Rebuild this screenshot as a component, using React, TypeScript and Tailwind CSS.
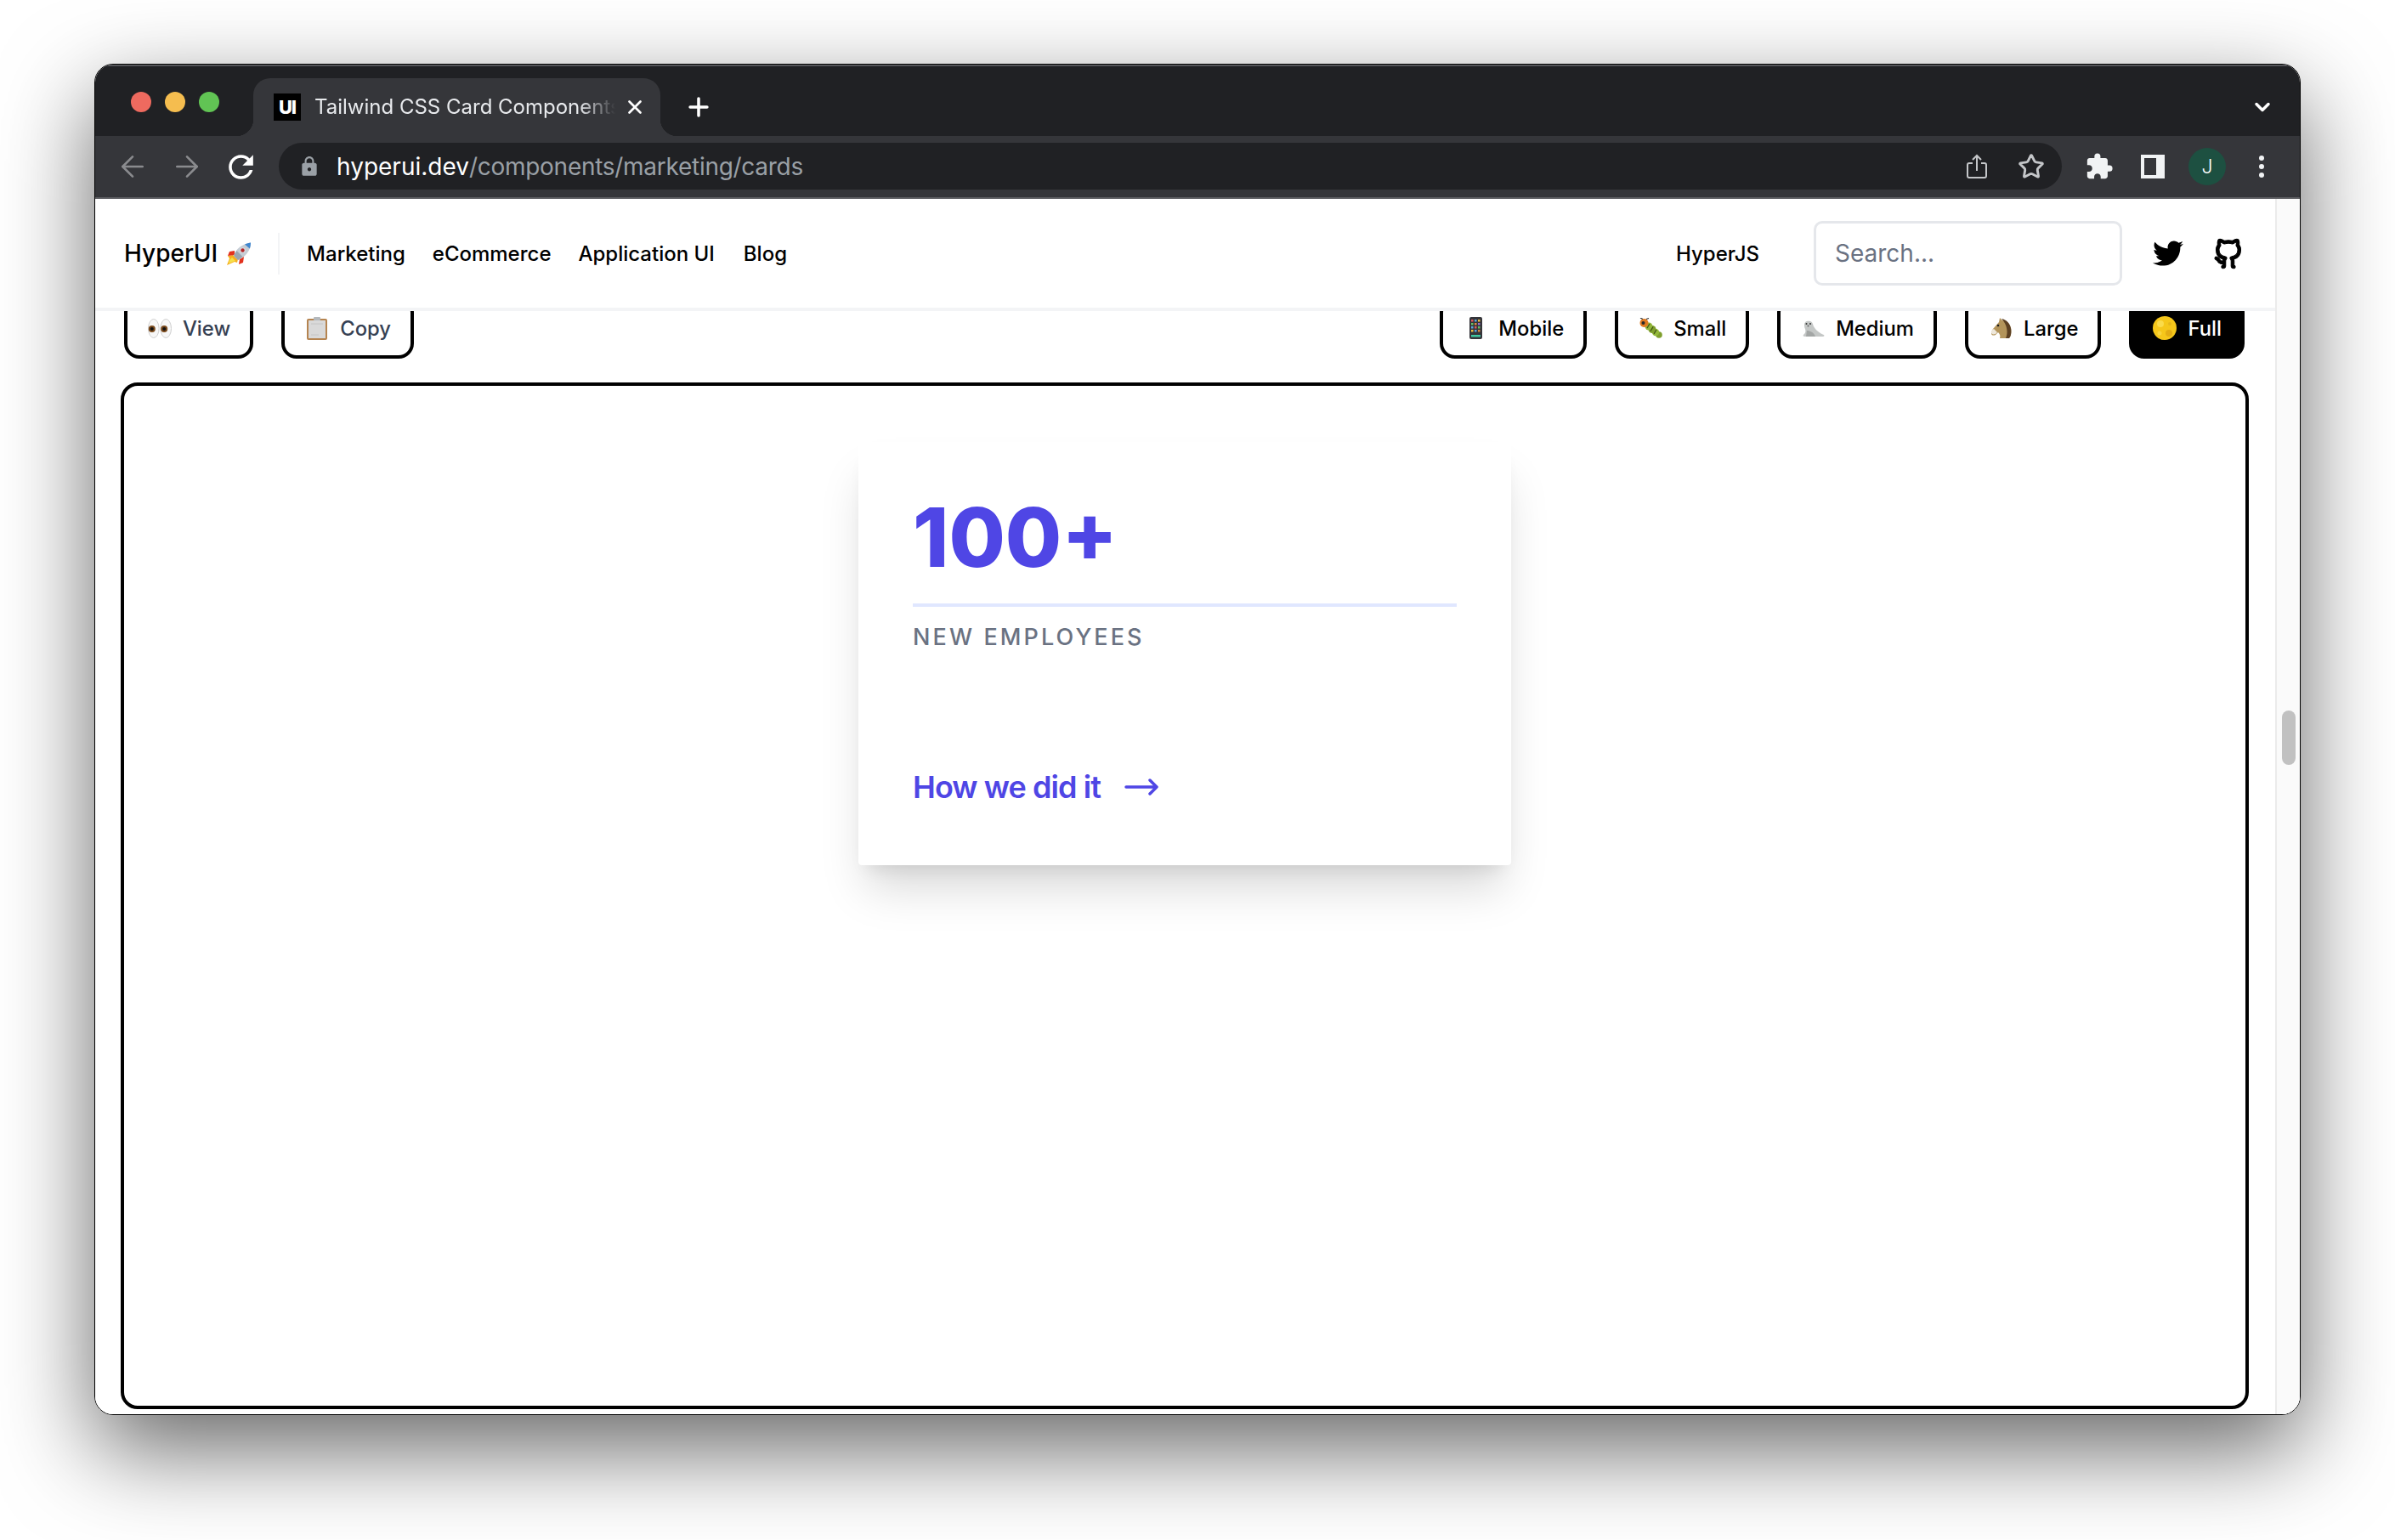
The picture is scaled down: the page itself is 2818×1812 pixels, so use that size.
import { ArrowLeft, ArrowRight, ChevronDown, Plus, Star, X } from 'lucide-react'
import { MdExtension, MdLock, MdRefresh } from 'react-icons/md'
import { FaTwitter } from 'react-icons/fa'
import { RiGithubLine } from 'react-icons/ri'
import type { ReactNode } from 'react'

const Rocket = () => (
  <svg viewBox="0 0 29 27" className="h-[27px] w-[29px]">
    <path d="M7 15 1 16l2 3-3 8 9-4 3 1 1-4z" fill="#f5b01f" />
    <path d="M6 18 3 21l-1 4 5-2 3-1z" fill="#f6e04a" />
    <path d="M9 10 3 11l-2 5 8-1zM15 20l-1 6 5-2 1-7z" fill="#e2311d" />
    <path d="M8 16C10 8 18 2 28 0.500 28 10 22 17 13 21z" fill="#c4ccd4" />
    <path d="M21 2.500c2.500-1 5-1.700 7-2 0 2.500-.5 5-1.200 7z" fill="#3f86cf" />
    <path d="M8 16c1-2 2-4 3.500-6l7 7c-2 1.500-3.500 3-5.500 4z" fill="#9aa5b0" />
    <circle cx="18.500" cy="9.500" r="3.300" fill="#d8dde2" />
    <circle cx="18.500" cy="9.500" r="2.200" fill="#b3262a" />
  </svg>
)

const Eyes = () => (
  <svg viewBox="0 0 28 23" className="h-[23px] w-[28px]">
    <ellipse cx="6.800" cy="11.500" rx="6.300" ry="11" fill="#f7f7f7" stroke="#cfcfcf" />
    <ellipse cx="21.200" cy="11.500" rx="6.300" ry="11" fill="#f7f7f7" stroke="#cfcfcf" />
    <circle cx="4.800" cy="12" r="4" fill="#7a4a1c" />
    <circle cx="19.200" cy="12" r="4" fill="#7a4a1c" />
    <circle cx="4.800" cy="12" r="2" fill="#111" />
    <circle cx="19.200" cy="12" r="2" fill="#111" />
  </svg>
)

const Clipboard = () => (
  <svg viewBox="0 0 24 27" className="h-[27px] w-[24px]">
    <rect x="0" y="2" width="24" height="25" rx="2" fill="#b58450" />
    <rect x="2" y="4" width="20" height="21" fill="#d9d9d9" />
    <rect x="8" y="0" width="8" height="4" rx="1" fill="#b4b8bc" />
    <path d="M5 8h14M5 21h9" stroke="#c4c4c4" strokeWidth="1" />
  </svg>
)

const Phone = () => (
  <svg viewBox="0 0 15 26" className="h-[26px] w-[15px]">
    <rect x="0" y="0" width="15" height="26" rx="2" fill="#35353a" />
    <rect x="2" y="3" width="2.500" height="2.500" fill="#e05a5a" />
    <rect x="6" y="3" width="2.500" height="2.500" fill="#5aa9e0" />
    <rect x="10" y="3" width="2.500" height="2.500" fill="#f0c040" />
    <rect x="2" y="7" width="2.500" height="2.500" fill="#67c267" />
    <rect x="6" y="7" width="2.500" height="2.500" fill="#e08a40" />
    <rect x="10" y="7" width="2.500" height="2.500" fill="#9a6fd0" />
    <rect x="2" y="11" width="2.500" height="2.500" fill="#5aa9e0" />
    <rect x="6" y="11" width="2.500" height="2.500" fill="#e05a5a" />
    <rect x="10" y="11" width="2.500" height="2.500" fill="#67c267" />
    <rect x="2" y="15" width="2.500" height="2.500" fill="#f0c040" />
    <rect x="6" y="15" width="2.500" height="2.500" fill="#5aa9e0" />
    <rect x="10" y="15" width="2.500" height="2.500" fill="#e08a40" />
    <rect x="2" y="21" width="11" height="2.500" fill="#3fc7a0" />
  </svg>
)

const Bug = () => (
  <svg viewBox="0 0 27 24" className="h-[24px] w-[27px]">
    <circle cx="23" cy="20" r="3.800" fill="#7f9f2d" />
    <circle cx="19" cy="17" r="4.200" fill="#93b83a" />
    <circle cx="15" cy="13.500" r="4.500" fill="#7f9f2d" />
    <circle cx="11" cy="10" r="4.500" fill="#93b83a" />
    <path d="M20 14l-3 5M16 10.500l-3 5M12 7l-3 5" stroke="#3f5216" strokeWidth="1.300" />
    <circle cx="5.500" cy="6" r="5" fill="#e07a1f" />
    <circle cx="4.500" cy="6" r="2" fill="#2a2a2a" />
    <path d="M4 1.500 1 0M8 1.500 11 0.500" stroke="#333" strokeWidth="1.200" />
  </svg>
)

const Seal = () => (
  <svg viewBox="0 0 27 19" className="h-[19px] w-[27px]">
    <path d="M3 5C3 1 7 0 10 1c3 1 3 4 4 6 2 4 7 8 12 10 1 1 0 2-1 2H4c-2 0-3-1-2-2 2-2 3-3 2-7-1-2-1-3-1-5z" fill="#c4c7c6" />
    <path d="M6 12c4 0 8 2 10 7H5z" fill="#a3a6a5" />
    <circle cx="5.500" cy="4" r="1" fill="#333" />
    <circle cx="10" cy="4" r="1" fill="#333" />
    <circle cx="7.500" cy="6.500" r="1" fill="#666" />
  </svg>
)

const Horse = () => (
  <svg viewBox="0 0 25 24" className="h-[24px] w-[25px]">
    <path d="M10 5 11 0l3 3c5 0 9 4 10 9 1 5 0 10-2 12H11c1-3 0-5-2-7l-3 3c-2 1-5 1-5-2 0-2 1-3 2-5z" fill="#b3945a" />
    <path d="M13 1c6 1 10 6 11 11 1 5 0 10-2 12h-4c3-6 2-16-5-23z" fill="#5c4022" />
    <path d="M1 17c0 2 2 3 5 2l2-2-4-4c-2 1-3 2-3 4z" fill="#eee8dc" />
    <circle cx="9" cy="9" r="1.300" fill="#1d1d1d" />
  </svg>
)

const Moon = () => (
  <svg viewBox="0 0 28 28" className="h-[28px] w-[28px]">
    <circle cx="14" cy="14" r="14" fill="#f5c71a" />
    <circle cx="9" cy="9" r="4" fill="#fadb4a" />
    <circle cx="19" cy="20" r="4" fill="#e3ad14" />
    <circle cx="20" cy="9" r="2" fill="#e6b71a" />
    <circle cx="8" cy="20" r="2.500" fill="#f9d53e" />
  </svg>
)

function ModeButton({ icon, label, active, dim }: { icon: ReactNode; label: string; active?: boolean; dim?: boolean }) {
  return (
    <div
      className={`flex h-[72px] items-center gap-[12px] rounded-[18px] border-4 px-[23px] text-[23.800px] font-medium ${
        active ? 'border-black bg-black text-white' : dim ? 'border-black text-gray-700' : 'border-black text-black'
      }`}
    >
      <span className="flex h-[30px] w-[30px] items-center justify-center">{icon}</span>
      <span className="mt-[2px]">{label}</span>
    </div>
  )
}

export default function App() {
  return (
    <div className="h-[1812px] w-[2818px] overflow-hidden bg-white pl-[111px] pt-[75px] font-['Inter',sans-serif]">
      <div className="flex h-[1590px] w-[2596px] flex-col overflow-hidden rounded-[22px] border border-black shadow-[0_40px_110px_rgba(0,0,0,0.6)]">
        {/* tab strip */}
        <div className="flex h-[84px] shrink-0 items-end border-t-2 border-[#55565a] bg-[#202124]">
          <div className="flex h-[46px] w-[186px] items-start gap-[16px] self-start pl-[42px] pt-[30px]">
            <span className="h-[24px] w-[24px] shrink-0 rounded-full bg-[#ee6a5f]" />
            <span className="h-[24px] w-[24px] shrink-0 rounded-full bg-[#f5bd4f]" />
            <span className="h-[24px] w-[24px] shrink-0 rounded-full bg-[#61c454]" />
          </div>
          <div className="relative flex h-[68px] w-[479px] items-center rounded-t-[20px] bg-[#35363a] pl-[24px]">
            <span className="absolute -left-[20px] bottom-0 h-[20px] w-[20px] bg-[radial-gradient(circle_at_0_0,#202124_20px,#35363a_20.500px)]" />
            <span className="absolute -right-[20px] bottom-0 h-[20px] w-[20px] bg-[radial-gradient(circle_at_100%_0,#202124_20px,#35363a_20.500px)]" />
            <span className="flex h-[32px] w-[32px] shrink-0 items-center justify-center bg-black text-[22px] font-extrabold leading-none tracking-tighter text-white">
              UI
            </span>
            <span className="ml-[16px] w-[354px] overflow-hidden whitespace-nowrap text-[24px] text-[#e8eaed] [mask-image:linear-gradient(to_right,black_88%,transparent_100%)]">
              Tailwind CSS Card Components - HyperUI
            </span>
            <X className="ml-[10px] h-[26px] w-[26px] text-white" strokeWidth={2.500} />
          </div>
          <Plus className="ml-[28px] mb-[17px] h-[34px] w-[34px] text-white" strokeWidth={2.500} />
          <ChevronDown className="mb-[20px] ml-auto mr-[30px] h-[28px] w-[28px] text-white" strokeWidth={3} />
        </div>

        {/* toolbar */}
        <div className="flex h-[74px] shrink-0 items-start border-b-2 border-[#5a5b5f] bg-[#35363a]">
          <div className="flex h-[72px] w-[216px] items-center gap-[24px] pl-[24px]">
            <ArrowLeft className="h-[40px] w-[40px] text-[#8a8b8e]" strokeWidth={1.600} />
            <ArrowRight className="h-[40px] w-[40px] text-[#8a8b8e]" strokeWidth={1.600} />
            <MdRefresh className="-ml-[2px] h-[43px] w-[43px] text-white" />
          </div>
          <div className="mt-[8px] flex h-[55px] w-[2098px] items-center rounded-full bg-[#202124] pl-[23px] pr-[20px]">
            <MdLock className="h-[26px] w-[26px] text-[#9aa0a6]" />
            <span className="ml-[19px] whitespace-nowrap text-[28px] text-white">
              hyperui.dev<span className="tracking-[-0.01em] text-[#9aa0a6]">/components/marketing/cards</span>
            </span>
            <svg viewBox="0 0 24 30" className="ml-auto h-[30px] w-[24px] fill-none stroke-[#c4c6c9]" strokeWidth="2">
              <path d="M7 11H3a2 2 0 0 0-2 2v13a2 2 0 0 0 2 2h18a2 2 0 0 0 2-2V13a2 2 0 0 0-2-2h-4" />
              <path d="M12 20V2M7 7l5-5 5 5" />
            </svg>
            <Star className="ml-[36px] h-[32px] w-[32px] text-[#c4c6c9]" strokeWidth={2.200} />
          </div>
          <div className="flex h-[72px] flex-1 items-center pl-[27px]">
            <MdExtension className="h-[34px] w-[34px] text-[#f1f3f4]" />
            <div className="ml-[32px] h-[28px] w-[28px] border-4 border-r-[10px] border-[#f1f3f4]" />
            <div className="ml-[28px] flex h-[44px] w-[44px] items-center justify-center rounded-full bg-[#1d5041] text-[23px] font-light text-white">
              J
            </div>
            <div className="ml-[39px] flex flex-col gap-[4px]">
              <span className="h-[6px] w-[6px] rounded-full bg-[#f1f3f4]" />
              <span className="h-[6px] w-[6px] rounded-full bg-[#f1f3f4]" />
              <span className="h-[6px] w-[6px] rounded-full bg-[#f1f3f4]" />
            </div>
          </div>
        </div>

        {/* page */}
        <div className="flex min-h-0 flex-1 bg-white">
          <div className="min-w-0 flex-1">
            <div className="flex h-[132px] items-center border-b-4 border-[#f3f4f6] pl-[34px] pr-[34px] text-[24px] font-medium text-black">
              <span className="flex items-center gap-[11px] text-[28px]">
                HyperUI <Rocket />
              </span>
              <span className="ml-[31px] h-[49px] w-[2px] bg-[#f3f4f6]" />
              <span className="ml-[32px] mt-[2px]">Marketing</span>
              <span className="ml-[32px] mt-[2px]">eCommerce</span>
              <span className="ml-[32px] mt-[2px]">Application UI</span>
              <span className="ml-[34px] mt-[2px]">Blog</span>
              <span className="ml-auto mt-[2px]">HyperJS</span>
              <div className="ml-[64px] flex h-[76px] w-[363px] items-center rounded-[10px] border-[3px] border-[#e5e7eb] pl-[22px] text-[28px] font-normal text-gray-500">
                Search...
              </div>
              <FaTwitter className="ml-[36px] h-[36px] w-[36px] text-black" />
              <RiGithubLine className="ml-[32px] h-[42px] w-[42px] stroke-current stroke-[0.6px] text-black" />
            </div>

            <div className="flex h-[56px] items-end gap-[33px] overflow-hidden pl-[34px] pr-[36px]">
              <ModeButton icon={<Eyes />} label="View" dim />
              <ModeButton icon={<Clipboard />} label="Copy" dim />
              <div className="ml-auto flex gap-[33px]">
                <ModeButton icon={<Phone />} label="Mobile" />
                <ModeButton icon={<Bug />} label="Small" />
                <ModeButton icon={<Seal />} label="Medium" />
                <ModeButton icon={<Horse />} label="Large" />
                <ModeButton icon={<Moon />} label="Full" active />
              </div>
            </div>

            <div className="ml-[30px] mt-[28px] flex h-[1208px] w-[2504px] justify-center rounded-[20px] border-4 border-black pt-[66px]">
              <div className="h-[498px] w-[768px] rounded-[4px] bg-white p-[64px] shadow-[0_36px_50px_-9px_rgba(0,0,0,0.15),0_14px_20px_-11px_rgba(0,0,0,0.1)]">
                <div className="border-b-4 border-[#e0e7ff] pb-[30px] text-[96px] font-extrabold leading-[96px] text-[#4f46e5]">
                  100+
                </div>
                <div className="mt-[18px] text-[27px] font-medium uppercase leading-[36px] tracking-[0.115em] text-gray-500">
                  New employees
                </div>
                <div className="mt-[134px] flex items-center gap-[28px] text-[36px] font-semibold leading-[48px] tracking-[-0.026em] text-[#4f46e5]">
                  How we did it
                  <svg viewBox="0 0 40 20" className="h-[20px] w-[40px] fill-none stroke-[#4f46e5]" strokeWidth="3.500" strokeLinecap="round" strokeLinejoin="round">
                    <path d="M2 10h36M30 2l8 8-8 8" />
                  </svg>
                </div>
              </div>
            </div>
          </div>

          <div className="w-[29px] shrink-0 border-l-2 border-[#ebebeb] bg-[#fafafa] pl-[6px] pt-[602px]">
            <div className="h-[64px] w-[16px] rounded-full bg-[#c1c1c1]" />
          </div>
        </div>
      </div>
    </div>
  )
}
